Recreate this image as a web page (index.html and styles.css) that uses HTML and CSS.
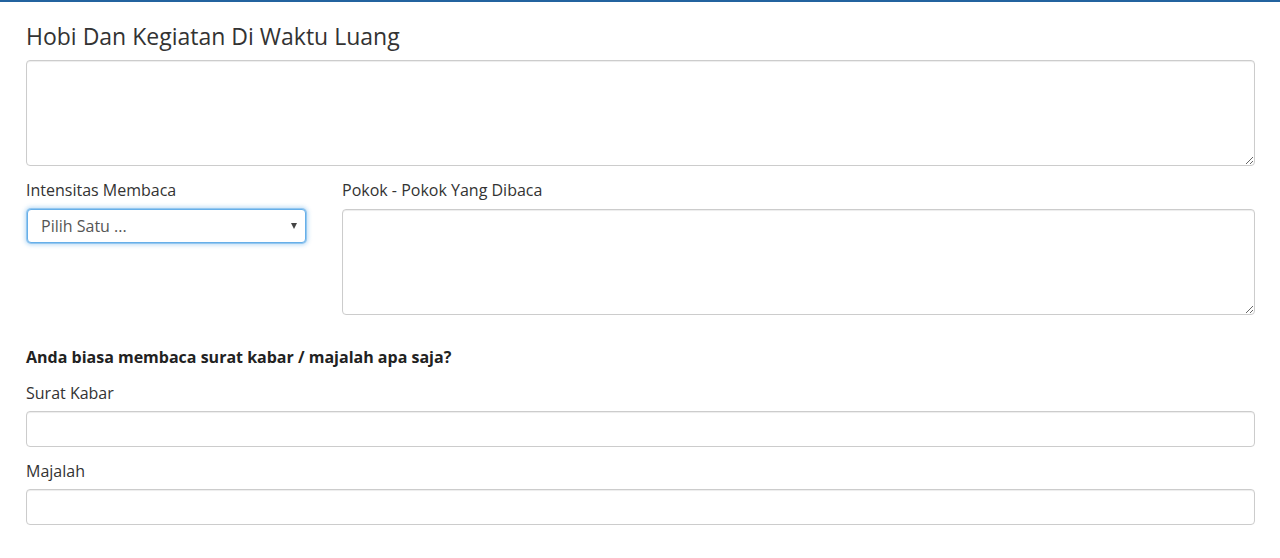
FILE: index.html
```html
<!DOCTYPE html>
<html lang="id">
<head>
<meta charset="utf-8">
<title>Hobi Dan Kegiatan</title>
<link rel="stylesheet" href="styles.css">
</head>
<body>
<div class="topbar"></div>
<main class="panel">
  <h2 class="title">Hobi Dan Kegiatan Di Waktu Luang</h2>
  <textarea class="field area area-hobi"></textarea>

  <div class="row">
    <div class="group">
      <label class="label">Intensitas Membaca</label>
      <div class="select focus">
        <span class="select-text">Pilih Satu ...</span>
        <span class="caret"></span>
      </div>
    </div>
    <div class="group">
      <label class="label">Pokok - Pokok Yang Dibaca</label>
      <textarea class="field area"></textarea>
    </div>
  </div>

  <p class="question">Anda biasa membaca surat kabar / majalah apa saja?</p>

  <label class="label label-tight">Surat Kabar</label>
  <input class="field input" type="text">

  <label class="label label-tight label-gap">Majalah</label>
  <input class="field input" type="text">
</main>
</body>
</html>
```

FILE: styles.css
```css
html, body {
  margin: 0;
  padding: 0;
  background: #ffffff;
}
body {
  font-family: "Open Sans", "Liberation Sans", sans-serif;
  color: #333333;
}
.topbar {
  height: 2px;
  background: #23639f;
}
.panel {
  padding: 21px 25px 30px 26px;
  display: flex;
  flex-direction: column;
}
.title {
  margin: 0 0 11px 0;
  font-size: 23px;
  line-height: 26px;
  font-weight: 400;
  color: #333333;
}
.field {
  box-sizing: border-box;
  width: 100%;
  border: 1px solid #cccccc;
  border-radius: 4px;
  background: #ffffff;
  font-family: inherit;
  margin: 0;
  display: block;
  box-shadow: inset 0 1px 1px rgba(0,0,0,0.075);
}
.area {
  height: 106px;
  resize: vertical;
}
.area-hobi {
  margin-bottom: 13px;
}
.row {
  display: grid;
  grid-template-columns: 281px 1fr;
  column-gap: 35px;
}
.group {
  display: flex;
  flex-direction: column;
}
.label {
  display: block;
  font-size: 16px;
  line-height: 22px;
  margin-bottom: 8px;
  color: #333333;
}
.label-tight {
  margin-bottom: 7px;
}
.label-gap {
  margin-top: 13px;
}
.select {
  box-sizing: border-box;
  height: 34px;
  margin: 0 1px;
  border: 1px solid #66afe9;
  border-radius: 4px;
  box-shadow: 0 0 0 1px rgba(102,175,233,0.55), 0 0 4px 2px rgba(102,175,233,0.45);
  display: flex;
  align-items: center;
  justify-content: space-between;
  padding: 0 8px 0 13px;
  background: #ffffff;
}
.select-text {
  font-size: 16px;
  color: #555555;
}
.caret {
  width: 0;
  height: 0;
  border-left: 3px solid transparent;
  border-right: 3px solid transparent;
  border-top: 6px solid #444444;
}
.question {
  margin: 31px 0 14px 0;
  font-size: 16px;
  line-height: 22px;
  font-weight: 700;
  color: #222222;
}
.input {
  height: 36px;
}
```
